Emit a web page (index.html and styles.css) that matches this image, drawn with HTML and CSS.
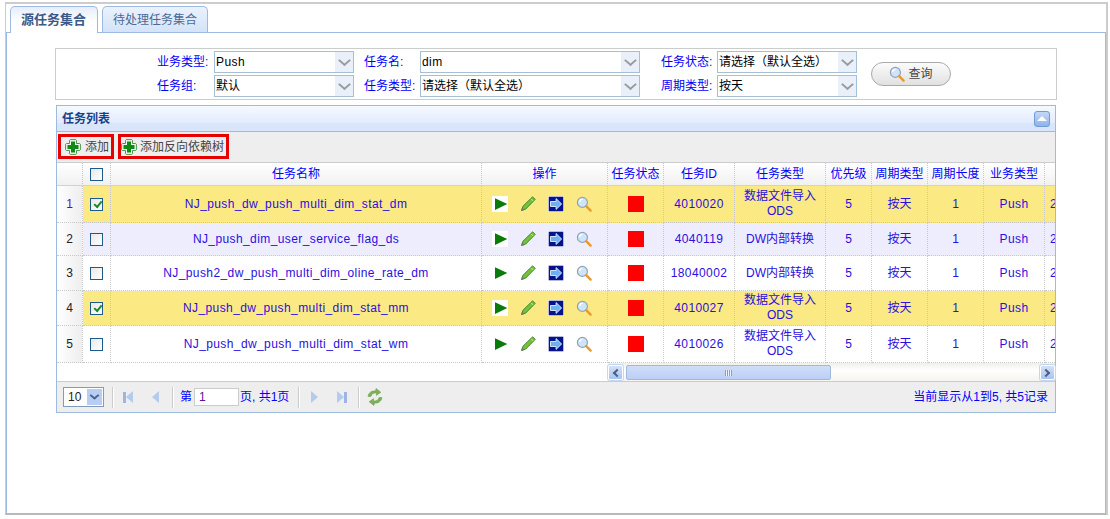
FILE: index.html
```html
<!DOCTYPE html>
<html lang="zh">
<head>
<meta charset="utf-8">
<title>任务集合</title>
<link rel="stylesheet" href="styles.css">
</head>
<body>
<svg class="defs" width="0" height="0" aria-hidden="true">
  <defs>
    <symbol id="i-add" viewBox="0 0 16 16">
      <path d="M5.2 .6h5.6l.7.7v3.2h3.2l.7.7v5.6l-.7.7h-3.2v3.2l-.7.7H5.2l-.7-.7v-3.2H1.3l-.7-.7V5.2l.7-.7h3.2V1.3z" fill="#f0f7ec" stroke="#4f9450"/>
      <path d="M6 2.5h4v3.5h3.5v4H10v3.5H6V10H2.5V6H6z" fill="#0f8a17"/>
    </symbol>
    <symbol id="i-search" viewBox="0 0 16 16">
      <circle cx="6.4" cy="6.4" r="5" fill="#cfe4f8" stroke="#8fa4b8" stroke-width="1.2"/>
      <path d="M3.6 6a3 3 0 0 1 3-2.6" fill="none" stroke="#fff" stroke-width="1.4"/>
      <path d="M10.2 10.2l4.4 4.4" stroke="#e89a2c" stroke-width="2.4" stroke-linecap="round"/>
    </symbol>
    <symbol id="i-play" viewBox="0 0 16 16">
      <rect width="16" height="16" fill="#fff"/>
      <path d="M3 2.3L15.3 8 3 13.9z" fill="#0a7a0a"/>
    </symbol>
    <symbol id="i-edit" viewBox="0 0 16 16">
      <path d="M12.6 .8l2.6 2.6-9.4 9.6-4.2 1.4 1.4-4.2z" fill="#74c23c" stroke="#3d7d22" stroke-width=".9"/>
      <path d="M11 2.8l2.2 2.2" stroke="#c3ec8f" stroke-width="1"/>
      <path d="M2.1 11.6l2.3 2.3-3.2 1z" fill="#77786a"/>
    </symbol>
    <symbol id="i-go" viewBox="0 0 16 16">
      <rect width="16" height="16" fill="#fff"/>
      <rect x=".7" y=".7" width="14.6" height="14.6" fill="#06148c"/>
      <path d="M2.5 5.5h5.6V2.6L13.6 8l-5.5 5.4v-2.9H2.5z" fill="#6fb0f2" stroke="#e4f1ff" stroke-width=".9"/>
    </symbol>
    <symbol id="i-refresh" viewBox="0 0 18 18">
      <path d="M2 8.4C2.6 4.4 6 2.4 9.6 3l.4-2.4 4.8 3.6-4.4 3.2.2-2.2C8 4.6 5.6 5.6 5 8.4z" fill="#7fb257" stroke="#5f9440" stroke-width=".5"/>
      <path d="M16 9.6c-.6 4-4 6-7.6 5.4L8 17.4l-4.8-3.6 4.4-3.2-.2 2.2c2.6.6 5-.4 5.6-3.2z" fill="#7fb257" stroke="#5f9440" stroke-width=".5"/>
    </symbol>
  </defs>
</svg>

<div class="frame">
  <div class="tabs">
    <div class="tab tab-active">源任务集合</div>
    <div class="tab">待处理任务集合</div>
  </div>
  <div class="panel">
    <form class="filter">
      <div class="filter-grid">
        <label class="lbl lbl-a">业务类型:</label>
        <div class="combo"><span class="lat">Push</span><i class="arrow"></i></div>
        <label class="lbl lbl-b">任务名:</label>
        <div class="combo"><span class="lat">dim</span><i class="arrow"></i></div>
        <label class="lbl lbl-c">任务状态:</label>
        <div class="combo"><span>请选择（默认全选）</span><i class="arrow"></i></div>
        <label class="lbl lbl-a">任务组:</label>
        <div class="combo"><span>默认</span><i class="arrow"></i></div>
        <label class="lbl lbl-b">任务类型:</label>
        <div class="combo"><span>请选择（默认全选）</span><i class="arrow"></i></div>
        <label class="lbl lbl-c">周期类型:</label>
        <div class="combo"><span>按天</span><i class="arrow"></i></div>
      </div>
      <button type="button" class="query"><svg class="ico-query"><use href="#i-search"/></svg>查询</button>
    </form>

    <section class="grid">
      <header class="grid-title">
        <span>任务列表</span>
        <span class="collapse"><i></i></span>
      </header>
      <div class="toolbar">
        <button type="button" class="tool tool-a"><svg class="ico-add"><use href="#i-add"/></svg>添加</button>
        <button type="button" class="tool tool-b"><svg class="ico-add"><use href="#i-add"/></svg>添加反向依赖树</button>
      </div>
      <div class="table-wrap">
        <table class="tbl">
          <colgroup>
            <col class="w-num"><col class="w-chk"><col class="w-name"><col class="w-op"><col class="w-st"><col class="w-id"><col class="w-type"><col class="w-pri"><col class="w-cyc"><col class="w-cyc"><col class="w-biz"><col class="w-more">
          </colgroup>
          <thead>
            <tr>
              <th class="num"></th><th><i class="chk"></i></th><th>任务名称</th><th>操作</th><th>任务状态</th><th>任务ID</th><th>任务类型</th><th>优先级</th><th>周期类型</th><th>周期长度</th><th>业务类型</th><th></th>
            </tr>
          </thead>
          <tbody>
            <tr class="sel r1">
              <td class="num">1</td><td><i class="chk on"></i></td><td class="lat">NJ_push_dw_push_multi_dim_stat_dm</td>
              <td><div class="ops"><svg><use href="#i-play"/></svg><svg><use href="#i-edit"/></svg><svg><use href="#i-go"/></svg><svg><use href="#i-search"/></svg></div></td>
              <td><i class="state"></i></td><td class="lat">4010020</td><td class="wrap">数据文件导入<br>ODS</td><td>5</td><td>按天</td><td>1</td><td class="lat">Push</td><td class="more">2</td>
            </tr>
            <tr class="hover r2">
              <td class="num">2</td><td><i class="chk"></i></td><td class="lat">NJ_push_dim_user_service_flag_ds</td>
              <td><div class="ops"><svg><use href="#i-play"/></svg><svg><use href="#i-edit"/></svg><svg><use href="#i-go"/></svg><svg><use href="#i-search"/></svg></div></td>
              <td><i class="state"></i></td><td class="lat">4040119</td><td>DW内部转换</td><td>5</td><td>按天</td><td>1</td><td class="lat">Push</td><td class="more">2</td>
            </tr>
            <tr class="r3">
              <td class="num">3</td><td><i class="chk"></i></td><td class="lat">NJ_push2_dw_push_multi_dim_oline_rate_dm</td>
              <td><div class="ops"><svg><use href="#i-play"/></svg><svg><use href="#i-edit"/></svg><svg><use href="#i-go"/></svg><svg><use href="#i-search"/></svg></div></td>
              <td><i class="state"></i></td><td class="lat">18040002</td><td>DW内部转换</td><td>5</td><td>按天</td><td>1</td><td class="lat">Push</td><td class="more">2</td>
            </tr>
            <tr class="sel r4">
              <td class="num">4</td><td><i class="chk on"></i></td><td class="lat">NJ_push_dw_push_multi_dim_stat_mm</td>
              <td><div class="ops"><svg><use href="#i-play"/></svg><svg><use href="#i-edit"/></svg><svg><use href="#i-go"/></svg><svg><use href="#i-search"/></svg></div></td>
              <td><i class="state"></i></td><td class="lat">4010027</td><td class="wrap">数据文件导入<br>ODS</td><td>5</td><td>按天</td><td>1</td><td class="lat">Push</td><td class="more">2</td>
            </tr>
            <tr class="r5">
              <td class="num">5</td><td><i class="chk"></i></td><td class="lat">NJ_push_dw_push_multi_dim_stat_wm</td>
              <td><div class="ops"><svg><use href="#i-play"/></svg><svg><use href="#i-edit"/></svg><svg><use href="#i-go"/></svg><svg><use href="#i-search"/></svg></div></td>
              <td><i class="state"></i></td><td class="lat">4010026</td><td class="wrap">数据文件导入<br>ODS</td><td>5</td><td>按天</td><td>1</td><td class="lat">Push</td><td class="more">2</td>
            </tr>
          </tbody>
        </table>
      </div>
      <div class="hscroll">
        <span class="sb-btn"><i class="sb-l"></i></span>
        <div class="sb-track">
          <div class="sb-thumb"><b></b></div>
        </div>
        <span class="sb-btn"><i class="sb-r"></i></span>
      </div>
      <footer class="pager">
        <div class="psize"><span>10</span><i><em></em></i></div>
        <span class="sep sep-a"></span>
        <span class="pg pg-edge"><b class="bar"></b><b class="tri-l"></b></span>
        <span class="pg pg-step pg-prev"><b class="tri-l"></b></span>
        <span class="sep sep-b"></span>
        <span class="ptext">第</span>
        <span class="pinput">1</span>
        <span class="ptext">页, 共1页</span>
        <span class="sep sep-c"></span>
        <span class="pg pg-step"><b class="tri-r"></b></span>
        <span class="pg pg-edge pg-last"><b class="tri-r"></b><b class="bar"></b></span>
        <span class="sep sep-d"></span>
        <svg class="ico-refresh"><use href="#i-refresh"/></svg>
        <span class="pinfo">当前显示从1到5, 共5记录</span>
      </footer>
    </section>
  </div>
</div>
</body>
</html>
```
FILE: styles.css
```css
* { box-sizing: border-box; }
html, body { margin: 0; padding: 0; background: #fff; }
body {
  width: 1110px;
  height: 519px;
  overflow: hidden;
  font: 12px/14px "Liberation Sans", "Noto Sans CJK SC", sans-serif;
  color: #00f;
  padding: 2px 2px 0 5px;
}
.defs { position: absolute; }
.lat { letter-spacing: .4px; }
.frame {
  height: 513px;
  border-top: 2px solid #ccc;
  border-right: 2px solid #ccc;
  border-bottom: 1px solid #bbb;
  border-left: 1px solid #ccc;
  padding-top: 2px;
  display: flex;
  flex-direction: column;
}

/* tabs */
.tabs { display: flex; gap: 4px; height: 27px; padding-left: 4px; position: relative; z-index: 1; }
.tab {
  height: 26px;
  padding: 0 10px;
  border: 1px solid #9dbbe0;
  border-bottom: 0;
  border-radius: 5px 5px 0 0;
  background: linear-gradient(#eaf2fd, #d4e3f8);
  color: #4a6a96;
  font-size: 12px;
  line-height: 26px;
  width: 106px;
}
.tab-active {
  width: 88px;
  height: 27px;
  background: linear-gradient(#e6eefb, #fff 60%);
  color: #3b5a88;
  font-size: 13px;
  font-weight: bold;
}
.panel {
  flex: 1;
  margin-top: -1px;
  border: 1px solid #9dbbe0;
  padding: 15px 48px 0 48px;
}

/* filter */
.filter {
  height: 52px;
  border: 1px solid #ccc;
  display: flex;
  align-items: center;
  padding: 2px 0 2px 98px;
}
.filter-grid {
  display: grid;
  grid-template-columns: 60px 140px 66px 220px 77px 140px;
  grid-auto-rows: 22px;
  row-gap: 2px;
  align-items: center;
}
.lbl { color: #00f; white-space: nowrap; }
.lbl-a { padding-left: 3px; }
.lbl-b { padding-left: 10px; }
.lbl-c { padding-left: 21px; }
.combo {
  height: 22px;
  border: 1px solid #a5bfd6;
  background: #fff;
  display: flex;
  align-items: center;
  color: #000;
  padding-left: 1px;
  white-space: nowrap;
  overflow: hidden;
}
.combo span { flex: 1; }
.arrow {
  width: 18px;
  height: 20px;
  background: #e9f0f9;
  position: relative;
  flex: none;
}
.arrow::after {
  content: "";
  position: absolute;
  left: 5px;
  top: 4px;
  width: 7px;
  height: 7px;
  border-right: 2px solid #9a9a9a;
  border-bottom: 2px solid #9a9a9a;
  transform: scale(1, .85) rotate(45deg);
}
.query {
  margin: 0 0 0 14px;
  width: 80px;
  height: 24px;
  border: 1px solid #aaa;
  border-radius: 12px;
  background: linear-gradient(#fbfbfb, #e1e1e1);
  color: #444;
  font: inherit;
  display: flex;
  align-items: center;
  justify-content: center;
  gap: 3px;
  padding: 0;
}
.ico-query { width: 16px; height: 16px; }

/* grid */
.grid {
  margin: 5px 0 0 1px;
  width: 1000px;
  height: 308px;
  border: 1px solid #9dbbe0;
  display: flex;
  flex-direction: column;
}
.grid-title {
  height: 26px;
  flex: none;
  background: linear-gradient(#f6f9ff, #e2ebfc 70%, #d9e5fa 70%);
  border-bottom: 1px solid #9dbbe0;
  color: #15428b;
  font-weight: bold;
  display: flex;
  align-items: center;
  justify-content: space-between;
  padding: 0 5px;
}
.collapse {
  width: 16px;
  height: 16px;
  border: 1px solid #6f9bd6;
  border-radius: 3px;
  background: linear-gradient(#c3d8f6, #8fb3ea);
  display: flex;
  align-items: center;
  justify-content: center;
}
.collapse i {
  width: 0;
  height: 0;
  border: 5px solid transparent;
  border-top: 0;
  border-bottom: 5px solid #fff;
}
.toolbar {
  height: 31px;
  flex: none;
  background: #eee;
  border-bottom: 1px solid #ccc;
  display: flex;
  align-items: flex-start;
  gap: 4px;
  padding: 2px 0 0 1px;
}
.tool {
  height: 25px;
  border: 3px solid #e60000;
  background: #eee;
  color: #444;
  font: inherit;
  display: flex;
  align-items: center;
}
.tool-a { width: 56px; gap: 4px; padding: 0 2px 0 4px; }
.tool-b { width: 111px; gap: 3px; padding: 0 2px 0 0; }
.ico-add { width: 16px; height: 16px; flex: none; }

/* table */
.table-wrap { flex: none; height: 200px; overflow: hidden; }
.tbl {
  border-collapse: separate;
  border-spacing: 0;
  table-layout: fixed;
  width: 1028px;
}
.w-num { width: 26px; }
.w-chk { width: 28px; }
.w-name { width: 371px; }
.w-op { width: 126px; }
.w-st { width: 56px; }
.w-id { width: 71px; }
.w-type { width: 91px; }
.w-pri { width: 46px; }
.w-cyc { width: 56px; }
.w-biz { width: 61px; }
.w-more { width: 40px; }
.tbl th, .tbl td {
  padding: 0;
  text-align: center;
  vertical-align: middle;
  border-right: 1px dotted #c8c8c8;
  border-bottom: 1px dotted #c8c8c8;
  white-space: nowrap;
}
.tbl th {
  height: 23px;
  font-weight: normal;
  color: #00f;
  background: linear-gradient(#fff, #f1f1f1);
  border-bottom: 1px solid #ccd3e0;
}
.tbl td { color: #2a0fe0; }
.tbl td.num {
  color: #222;
  background: linear-gradient(90deg, #fff, #eee);
}
.r1 td { height: 37px; }
.r2 td { height: 33px; }
.r3 td { height: 35px; }
.r4 td { height: 35px; }
.r5 td { height: 37px; }
.sel td { background: #fbe983; }
.hover td { background: #eeedfd; }
.sel td.num { background: linear-gradient(90deg, #fff, #eee); }
.r1 td.num { color: #60109a; }
.tbl td.more { text-align: left; padding-left: 5px; overflow: hidden; }
.tbl td.wrap { line-height: 15px; white-space: normal; }
.chk {
  display: block;
  width: 13px;
  height: 13px;
  margin: 0 auto;
  border: 1px solid #1d5a8a;
  background: linear-gradient(135deg, #e8e8e8, #fff);
  position: relative;
}
.chk.on::after {
  content: "";
  position: absolute;
  left: 3px;
  top: 2px;
  width: 6px;
  height: 3px;
  border-left: 2px solid #1a8a2a;
  border-bottom: 2px solid #1a8a2a;
  transform: rotate(-50deg);
}
.ops {
  display: flex;
  justify-content: center;
  gap: 12px;
  padding-right: 5px;
}
.ops svg { width: 16px; height: 16px; display: block; }
.state { display: block; width: 16px; height: 16px; margin: 0 auto; background: #f00; }

/* scrollbar */
.hscroll {
  flex: none;
  height: 18px;
  margin-left: 551px;
  display: flex;
  gap: 1px;
  background: linear-gradient(#f0efe9, #fff 40%, #f5f4ee);
  padding: 2px 0 1px;
}
.sb-btn {
  width: 15px;
  flex: none;
  border: 1px solid #fff;
  border-radius: 2px;
  background: linear-gradient(#d4e1f8, #a9c3f0);
  box-shadow: 0 0 0 1px #c5d6ef;
  display: flex;
  align-items: center;
  justify-content: center;
}
.sb-l, .sb-r {
  width: 6px;
  height: 6px;
  border-left: 2px solid #4d6185;
  border-bottom: 2px solid #4d6185;
}
.sb-l { transform: rotate(45deg); margin-left: 3px; }
.sb-r { transform: rotate(225deg); margin-right: 3px; }
.sb-track { flex: 1; padding: 0 0 0 2px; }
.sb-thumb {
  width: 205px;
  height: 100%;
  border: 1px solid #9fb8e0;
  border-radius: 2px;
  background: linear-gradient(#d0ddf8, #bbcff5);
  display: flex;
  align-items: center;
  justify-content: center;
}
.sb-thumb b {
  width: 7px;
  height: 6px;
  background: repeating-linear-gradient(90deg, #8b9dc0 0 1px, #eef3ff 1px 2px);
}

/* pager */
.pager {
  flex: none;
  height: 31px;
  background: #eee;
  border-top: 1px solid #ccc;
  display: flex;
  align-items: center;
  padding: 0 7px 0 6px;
}
.psize {
  width: 41px;
  height: 20px;
  border: 1px solid #7f9db9;
  background: #fff;
  color: #222;
  display: flex;
  align-items: center;
  justify-content: space-between;
  padding-left: 4px;
  flex: none;
}
.psize i {
  width: 15px;
  height: 16px;
  background: #b7cdf4;
  margin-right: 1px;
  position: relative;
}
.psize em {
  position: absolute;
  left: 4px;
  top: 3px;
  width: 7px;
  height: 7px;
  border-right: 2px solid #4d6185;
  border-bottom: 2px solid #4d6185;
  transform: scale(1, .8) rotate(45deg);
}
.sep { width: 2px; height: 21px; background: linear-gradient(90deg, #ccc 50%, #fff 50%); flex: none; }
.sep-a { margin: 0 9px 0 8px; }
.sep-b { margin: 0 6px 0 13px; }
.sep-c { margin: 0 11px 0 9px; }
.sep-d { margin: 0 6px 0 11px; }
.pg { height: 16px; display: flex; align-items: center; flex: none; }
.pg-edge { width: 10px; }
.pg-step { width: 7px; }
.pg-prev { margin-left: 19px; }
.pg-last { margin-left: 19px; }
.bar { display: block; width: 3px; height: 11px; background: #9cb6e0; }
.tri-l, .tri-r { display: block; width: 0; height: 0; border: 6px solid transparent; }
.tri-l { border-left: 0; border-right: 7px solid #b5cbed; }
.tri-r { border-right: 0; border-left: 7px solid #b5cbed; }
.ptext { color: #00f; white-space: nowrap; }
.pinput {
  width: 45px;
  height: 18px;
  margin: 0 1px 0 2px;
  border: 1px solid #ccc;
  background: #fff;
  color: #60109a;
  padding-left: 4px;
  line-height: 16px;
}
.ico-refresh { width: 18px; height: 18px; flex: none; }
.pinfo { margin-left: auto; color: #00f; white-space: nowrap; }
```
